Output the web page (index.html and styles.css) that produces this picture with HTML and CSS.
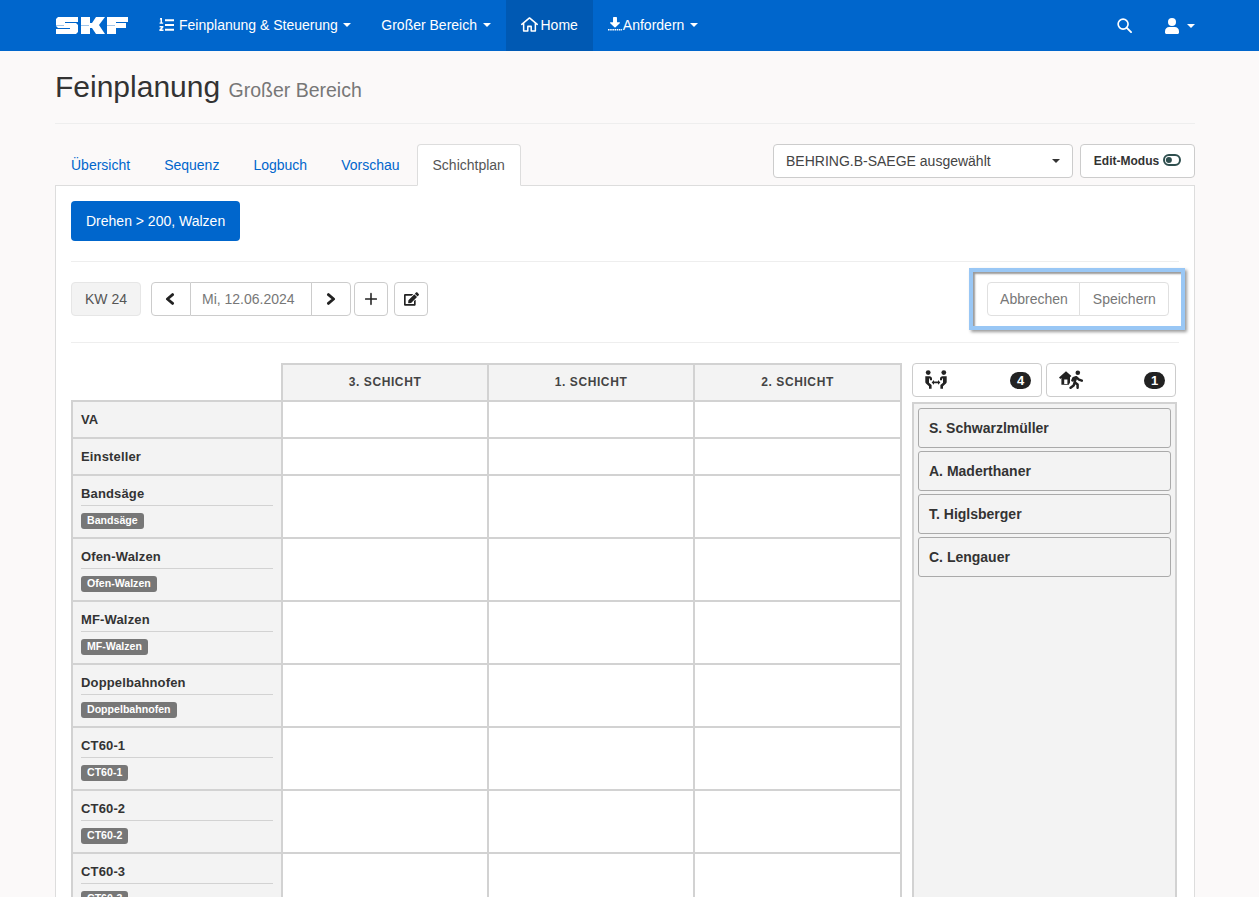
FILE: index.html
```html
<!DOCTYPE html>
<html lang="de">
<head>
<meta charset="utf-8">
<title>Feinplanung</title>
<link rel="stylesheet" href="styles.css">
</head>
<body>
<div class="page">
<nav class="navbar">
  <svg class="logo" viewBox="0 0 72 17" width="72" height="17"><path fill="#fff" d="M2 0H22V5H9V6H20L22 8V15L20 17H0V12H14V11H2L0 9V2Z"/><path fill="#fff" d="M25 0H34V6H36L40 0H49L43 8L49 17H40L36 11H34V17H25Z"/><path fill="#fff" d="M51 0H72V5H60V6H70V11H60V17H51Z"/><path fill="#0066cc" d="M0 8H8V8.8H0ZM25 8H33V8.8H25ZM51 8H59V8.8H51Z" opacity=".5"/></svg>
  <a class="nav-link"><svg class="ico ico-list" viewBox="0 0 15 14" width="15" height="14"><path fill="#fff" d="M6 1.2H15V3.2H6ZM6 6H15V8H6ZM6 10.8H15V12.8H6ZM1.2 0H3V4.6H4.2V5.8H.6V4.6H1.5V1.5H.8ZM.6 8H4.4V9.5L2.6 11.4H4.5V13H.4V11.6L2.4 9.5H.6Z"/></svg>Feinplanung &amp; Steuerung<span class="caret"></span></a>
  <a class="nav-link">Großer Bereich<span class="caret"></span></a>
  <a class="nav-link active"><svg class="ico ico-home" viewBox="0 0 576 512" width="17" height="15"><path fill="none" stroke="#fff" stroke-width="52" stroke-linejoin="round" stroke-linecap="round" d="M24 250 288 32l264 218M88 210V480H230V320H346V480H488V210"/></svg>Home</a>
  <a class="nav-link"><svg class="ico ico-dl" viewBox="0 0 512 512" width="14" height="14"><path fill="#fff" d="M208 0h96c13 0 24 11 24 24v168h88c18 0 27 21 15 34L267 380c-6 6-16 6-22 0L81 226c-12-13-3-34 15-34h88V24c0-13 11-24 24-24z"/><path fill="none" stroke="#fff" stroke-width="56" stroke-dasharray="56 24" d="M0 470H512"/></svg>Anfordern<span class="caret"></span></a>
  <div class="nav-right">
    <a class="nav-icon"><svg viewBox="0 0 512 512" width="15" height="15"><circle cx="208" cy="208" r="170" fill="none" stroke="#fff" stroke-width="56"/><path stroke="#fff" stroke-width="64" stroke-linecap="round" d="M335 335 480 480"/></svg></a>
    <a class="nav-icon nav-user"><svg viewBox="0 0 448 512" width="14" height="16"><circle cx="224" cy="128" r="128" fill="#fff"/><path fill="#fff" d="M134 288h180c74 0 134 60 134 134v42c0 26-22 48-48 48H48c-26 0-48-22-48-48v-42c0-74 60-134 134-134z"/></svg><span class="caret"></span></a>
  </div>
</nav>

<main class="container">
  <header class="page-header">
    <h1>Feinplanung <small>Großer Bereich</small></h1>
  </header>

  <div class="tabs-row">
    <ul class="tabs">
      <li>Übersicht</li>
      <li>Sequenz</li>
      <li>Logbuch</li>
      <li>Vorschau</li>
      <li class="tab-active">Schichtplan</li>
    </ul>
    <div class="tabs-tools">
      <button class="select">BEHRING.B-SAEGE ausgewählt<span class="caret dark"></span></button>
      <button class="btn edit-btn">Edit-Modus<svg viewBox="0 0 576 512" width="18" height="16"><rect x="32" y="98" width="512" height="316" rx="158" fill="none" stroke="#2f4f4f" stroke-width="64"/><circle cx="188" cy="256" r="96" fill="#2f4f4f"/></svg></button>
    </div>
  </div>

  <section class="tab-panel">
    <button class="primary">Drehen &gt; 200, Walzen</button>
    <hr class="rule first">
    <div class="toolbar">
      <span class="kw">KW 24</span>
      <div class="btn-group date-group">
        <button class="btn square"><svg class="chev-left" viewBox="0 0 10 12" width="10" height="12"><path fill="none" stroke="#222" stroke-width="2.8" stroke-linecap="round" stroke-linejoin="round" d="M7.6 1.6 2.4 6l5.2 4.4"/></svg></button>
        <span class="date">Mi, 12.06.2024</span>
        <button class="btn square"><svg viewBox="0 0 10 12" width="10" height="12"><path fill="none" stroke="#222" stroke-width="2.8" stroke-linecap="round" stroke-linejoin="round" d="M2.4 1.6 7.6 6l-5.2 4.4"/></svg></button>
      </div>
      <button class="btn icon-btn"><svg viewBox="0 0 448 512" width="12" height="14"><path stroke="#222" stroke-width="58" stroke-linecap="round" d="M224 56V456M24 256H424"/></svg></button>
      <button class="btn icon-btn edit-icon"><svg viewBox="0 0 576 512" width="15" height="14"><path fill="#222" d="M402 83l90 90c4 4 4 10 0 14L274 405l-93 10c-12 2-23-9-21-21l10-93L388 83c4-4 10-4 14 0zM564 60l-49-49c-15-15-40-15-55 0l-35 35c-4 4-4 10 0 14l90 90c4 4 10 4 14 0l35-35c15-15 15-40 0-55zM384 346V448H64V128h230c3 0 6-1 8-3l40-40c8-8 2-21-8-21H48C21 64 0 85 0 112v352c0 27 21 48 48 48h352c27 0 48-21 48-48V306c0-11-13-16-21-9l-40 40c-2 3-3 6-3 9z"/></svg></button>
      <div class="save-box">
        <div class="btn-group">
          <button class="btn ghost">Abbrechen</button>
          <button class="btn ghost">Speichern</button>
        </div>
      </div>
    </div>
    <hr class="rule">

    <div class="plan">
      <table class="grid">
        <thead>
          <tr><th class="blank"></th><th class="shift">3. SCHICHT</th><th class="shift">1. SCHICHT</th><th class="shift">2. SCHICHT</th></tr>
        </thead>
        <tbody>
          <tr class="short"><th class="role">VA</th><td></td><td></td><td></td></tr>
          <tr class="short"><th class="role">Einsteller</th><td></td><td></td><td></td></tr>
          <tr class="tall"><th class="role"><div class="name">Bandsäge</div><span class="badge">Bandsäge</span></th><td></td><td></td><td></td></tr>
          <tr class="tall"><th class="role"><div class="name">Ofen-Walzen</div><span class="badge">Ofen-Walzen</span></th><td></td><td></td><td></td></tr>
          <tr class="tall"><th class="role"><div class="name">MF-Walzen</div><span class="badge">MF-Walzen</span></th><td></td><td></td><td></td></tr>
          <tr class="tall"><th class="role"><div class="name">Doppelbahnofen</div><span class="badge">Doppelbahnofen</span></th><td></td><td></td><td></td></tr>
          <tr class="tall"><th class="role"><div class="name">CT60-1</div><span class="badge">CT60-1</span></th><td></td><td></td><td></td></tr>
          <tr class="tall"><th class="role"><div class="name">CT60-2</div><span class="badge">CT60-2</span></th><td></td><td></td><td></td></tr>
          <tr class="tall"><th class="role"><div class="name">CT60-3</div><span class="badge">CT60-3</span></th><td></td><td></td><td></td></tr>
        </tbody>
      </table>
      <aside class="side">
        <div class="side-tabs">
          <button class="side-tab"><svg viewBox="0 0 22 19" width="22" height="19"><circle cx="3.2" cy="2.6" r="2.4" fill="#222"/><circle cx="18.8" cy="2.6" r="2.4" fill="#222"/><path fill="#222" d="M.3 6.2H4.4C6 6.2 7 7.2 7 8.8V10.2H4.9V8.6H4V12.8L6.6 15V18.8H4V16.2L1 13.6C.5 13.2.3 12.7.3 12.1Z"/><path fill="#222" d="M21.7 6.2H17.6C16 6.2 15 7.2 15 8.8V10.2H17.1V8.6H18V12.8L15.4 15V18.8H18V16.2L21 13.6C21.5 13.2 21.7 12.7 21.7 12.1Z"/><path fill="#222" d="M6.6 12.4 9 10V11.6H13V10L15.4 12.4 13 14.8V13.2H9V14.8Z"/></svg><span class="pill">4</span></button>
          <button class="side-tab"><svg viewBox="0 0 24 19" width="24" height="19"><path fill="#222" d="M7 1.2 0 7.6 1.3 9 2.4 8V14.8H9.8L11 12.6V7.2L12.4 6ZM5.2 9.5H8.4V14H5.2Z" fill-rule="evenodd"/><circle cx="18.8" cy="2.7" r="2.3" fill="#222"/><path fill="none" stroke="#222" stroke-width="2.5" stroke-linejoin="round" stroke-linecap="round" d="M17.2 7.2 15.6 12.2 18.6 14.6V17.8M15.6 12.6 14.6 15.6 11.6 17.8M17.2 7.2 20 9.6 22.8 10.6M17.2 7.2 14.4 8.2 13.4 10.4"/></svg><span class="pill">1</span></button>
        </div>
        <div class="people">
          <div class="person">S. Schwarzlmüller</div>
          <div class="person">A. Maderthaner</div>
          <div class="person">T. Higlsberger</div>
          <div class="person">C. Lengauer</div>
        </div>
      </aside>
    </div>
  </section>
</main>
</div>
</body>
</html>
```
FILE: styles.css
```css
* { box-sizing: border-box; }
html, body { margin: 0; padding: 0; }
body {
  font-family: "Liberation Sans", Arial, sans-serif;
  font-size: 14px;
  line-height: 20px;
  color: #333;
  background: #fbf9f9;
}
.page { height: 100vh; overflow: hidden; }
button { font: inherit; color: inherit; cursor: pointer; }

.navbar {
  height: 51px;
  background: #0066cc;
  display: flex;
  align-items: stretch;
  padding: 0 64px 0 56px;
  color: #fff;
}
.logo { margin: 17px 16px 0 0; flex: none; }
.nav-link {
  display: flex;
  align-items: center;
  padding: 0 15px 2px;
  font-size: 14px;
  color: #fff;
  white-space: nowrap;
}
.nav-link.active { background: #0059b3; }
.ico { flex: none; }
.ico-list { margin-right: 5px; }
.ico-home { margin-right: 3px; }
.ico-dl { margin-right: 1px; margin-top: -1px; }
.caret {
  display: inline-block;
  width: 0;
  height: 0;
  margin-left: 5.5px;
  border-top: 4px solid #fff;
  border-left: 4px solid transparent;
  border-right: 4px solid transparent;
}
.caret.dark { border-top-color: #333; margin-left: auto; }
.nav-right { margin-left: auto; display: flex; align-items: center; gap: 33px; }
.nav-icon { display: flex; align-items: center; }
.nav-user .caret { margin-left: 8px; }

.container { margin: 0 64px 0 55px; }
.page-header {
  height: 73px;
  border-bottom: 1px solid #eee;
}
h1 {
  margin: 0;
  padding-top: 19px;
  font-size: 30px;
  line-height: 33px;
  font-weight: 400;
  color: #333;
}
h1 small { font-size: 19.5px; color: #777; }

.tabs-row {
  display: flex;
  justify-content: space-between;
  align-items: flex-start;
  margin-top: 20px;
  height: 42px;
}
.tabs {
  list-style: none;
  margin: 0;
  padding: 0;
  display: flex;
  gap: 2px;
  height: 42px;
}
.tabs li {
  padding: 10px 15px;
  color: #0066cc;
  height: 42px;
  border: 1px solid transparent;
  border-radius: 4px 4px 0 0;
}
.tabs .tab-active {
  color: #555;
  background: #fff;
  border-color: #ddd #ddd #fff;
  position: relative;
  z-index: 1;
  margin-left: -1px;
}
.tabs-tools { display: flex; gap: 7px; }
.select {
  width: 300px;
  height: 34px;
  padding: 0 12px;
  background: #fff;
  border: 1px solid #ccc;
  border-radius: 4px;
  display: flex;
  align-items: center;
  text-align: left;
  color: #444;
}
.btn {
  background: #fff;
  border: 1px solid #ccc;
  border-radius: 4px;
  height: 34px;
  padding: 0;
  display: inline-flex;
  align-items: center;
  justify-content: center;
}
.edit-btn { width: 115px; font-size: 12px; font-weight: 700; gap: 4px; }
.edit-btn svg { margin-top: -2px; }

.tab-panel {
  background: #fff;
  border: 1px solid #ddd;
  padding: 15px;
  height: 800px;
  margin-top: -1px;
}
.primary {
  display: block;
  height: 40px;
  padding: 0 15px;
  background: #0066cc;
  color: #fff;
  border: 0;
  border-radius: 4px;
  white-space: nowrap;
}
.rule { border: 0; border-top: 1px solid #eee; margin: 0; }
.rule.first { margin-top: 20px; }

.toolbar {
  height: 80px;
  padding-top: 20px;
  display: flex;
  align-items: flex-start;
}
.kw {
  width: 70px;
  height: 34px;
  display: flex;
  align-items: center;
  justify-content: center;
  background: #f3f3f3;
  border: 1px solid #e6e6e6;
  border-radius: 4px;
  color: #555;
  margin-right: 10px;
}
.btn-group { display: inline-flex; }
.btn-group .btn + .btn, .date + .btn { margin-left: -1px; }
.btn-group .btn:not(:last-child) { border-top-right-radius: 0; border-bottom-right-radius: 0; }
.btn-group .btn:not(:first-child) { border-top-left-radius: 0; border-bottom-left-radius: 0; }
.square { width: 40px; }
.chev-left { margin-left: -2px; }
.date {
  width: 121px;
  height: 34px;
  padding-left: 11px;
  display: flex;
  align-items: center;
  border-top: 1px solid #ccc;
  border-bottom: 1px solid #ccc;
  background: #fff;
  color: #777;
}
.date-group { margin-right: 3px; }
.icon-btn { width: 34px; }
.edit-icon { margin-left: 6px; }
.save-box {
  margin: -14px -6px 0 auto;
  width: 216px;
  height: 62px;
  border: 4px solid #99c7f5;
  box-shadow: inset 2px 2px 2px 0 #9a9a9a, 2px 2px 3px #9a9a9a;
  background: #fff;
  display: flex;
  align-items: center;
  justify-content: center;
}
.ghost { color: #777; border-color: #e0e0e0; padding: 0 12px; }
.ghost:first-child { padding-right: 11px; }
.ghost:last-child { padding-left: 13px; }
.save-box .btn-group { margin-left: 2px; }

.plan { display: flex; align-items: flex-start; margin-top: 20px; gap: 10px; }
.grid {
  border-collapse: collapse;
  table-layout: fixed;
  width: 831px;
  flex: none;
}
.grid th, .grid td { border: 2px solid #d2d2d2; padding: 0; }
.grid .blank { border: 0; border-bottom: 2px solid #d2d2d2; width: 210px; background: none; }
.grid .shift {
  height: 37px;
  padding-bottom: 2px;
  background: #f3f3f3;
  font-size: 12px;
  letter-spacing: .6px;
  font-weight: 700;
  color: #444;
  width: 206px;
}
.grid .shift:last-child { width: 207px; }
.grid td { background: #fff; }
tr.short { height: 37px; }
tr.tall { height: 63px; }
.role {
  background: #f3f3f3;
  text-align: left;
  font-size: 13px;
  font-weight: 700;
  color: #333;
  padding: 0 8px !important;
  letter-spacing: .15px;
  vertical-align: middle;
}
.name {
  border-bottom: 1px solid #d2d2d2;
  margin: 2px 0 7px;
  height: 23px;
  line-height: 22px;
}
.badge {
  display: inline-block;
  background: #777;
  color: #fff;
  font-size: 10.6px;
  line-height: 15px;
  height: 16px;
  padding: 0 6px;
  border-radius: 3px;
  letter-spacing: 0;
  vertical-align: top;
}

.side { width: 265px; flex: none; }
.side-tabs { display: flex; gap: 4px; }
.side-tab {
  width: 130px;
  height: 34px;
  background: #fff;
  border: 1px solid #ccc;
  border-radius: 4px;
  display: flex;
  align-items: center;
  justify-content: space-between;
  padding: 0 10px 0 12px;
}
.side-tab svg { margin-top: -2px; flex: none; }
.pill {
  width: 21px;
  height: 17px;
  margin-top: 1px;
  border-radius: 9px;
  background: #222;
  color: #fff;
  font-size: 13px;
  line-height: 17px;
  font-weight: 700;
  text-align: center;
}
.people {
  margin-top: 5px;
  width: 265px;
  height: 600px;
  background: #f3f3f3;
  border: 2px solid #d2d2d2;
  padding: 4px;
  display: flex;
  flex-direction: column;
  gap: 3px;
}
.person {
  height: 40px;
  line-height: 38px;
  padding-left: 10px;
  background: #f3f3f3;
  border: 1px solid #aaa;
  border-radius: 3px;
  font-weight: 700;
  font-size: 14px;
  color: #333;
}
```
